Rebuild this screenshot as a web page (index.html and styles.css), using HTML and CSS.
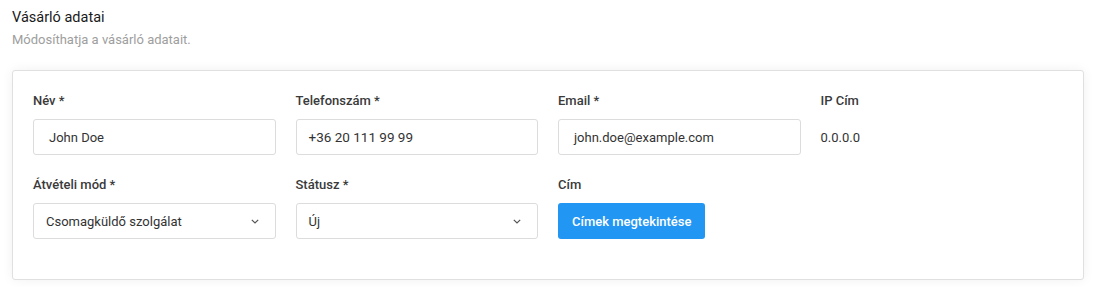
FILE: index.html
```html
<!DOCTYPE html>
<html lang="hu">
<head>
<meta charset="utf-8">
<title>Vásárló adatai</title>
<link rel="stylesheet" href="styles.css">
</head>
<body>
<div class="page">
  <div class="head">
    <h2 class="title">Vásárló adatai</h2>
    <p class="subtitle">Módosíthatja a vásárló adatait.</p>
  </div>
  <div class="card">
    <div class="grid">
      <div class="field">
        <label class="label">Név *</label>
        <div class="input pad15">John Doe</div>
      </div>
      <div class="field">
        <label class="label">Telefonszám *</label>
        <div class="input pad12 big">+36 20 111 99 99</div>
      </div>
      <div class="field">
        <label class="label">Email *</label>
        <div class="input pad15">john.doe@example.com</div>
      </div>
      <div class="field">
        <label class="label">IP Cím</label>
        <div class="plain">0.0.0.0</div>
      </div>
      <div class="field">
        <label class="label">Átvételi mód *</label>
        <div class="input select pad12">
          <span>Csomagküldő szolgálat</span>
          <svg class="chev" width="8" height="5" viewBox="0 0 8 5"><path d="M0.8 0.8 L4 4 L7.2 0.8" fill="none" stroke="#555" stroke-width="1.2"/></svg>
        </div>
      </div>
      <div class="field">
        <label class="label">Státusz *</label>
        <div class="input select pad12">
          <span>Új</span>
          <svg class="chev" width="8" height="5" viewBox="0 0 8 5"><path d="M0.8 0.8 L4 4 L7.2 0.8" fill="none" stroke="#555" stroke-width="1.2"/></svg>
        </div>
      </div>
      <div class="field">
        <label class="label">Cím</label>
        <div><button class="btn">Címek megtekintése</button></div>
      </div>
    </div>
  </div>
</div>
</body>
</html>
```
FILE: styles.css
```css
* { box-sizing: border-box; }
html, body { margin: 0; padding: 0; background: #fff; }
body { font-family: Roboto, "Noto Sans", sans-serif; color: #222; }
.page { padding: 8px 14px 8px 12px; }
.head { margin-bottom: 20px; }
.title { margin: 0; font-size: 14.5px; font-weight: 400; line-height: 20px; color: #1a1a1a; }
.subtitle { margin: 2px 0 0; font-size: 13px; line-height: 20px; color: #9e9e9e; }
.card {
  border: 1px solid #e0e0e0;
  border-radius: 3px;
  background: #fff;
  box-shadow: 0 0 12px rgba(0,0,0,0.06);
  padding: 20px 20px 40px;
  height: 210px;
}
.grid {
  display: grid;
  grid-template-columns: repeat(4, 1fr);
  column-gap: 20px;
  row-gap: 20px;
}
.field { display: flex; flex-direction: column; }
.label { font-size: 13px; font-weight: 500; line-height: 20px; color: #3a3a3a; margin-bottom: 8px; }
.input {
  height: 36px;
  border: 1px solid #dcdcdc;
  border-radius: 3px;
  display: flex;
  align-items: center;
  font-size: 13px;
  color: #333;
}
.pad15 { padding: 0 15px; }
.pad12 { padding: 0 12px; }
.big { font-size: 13.5px; }
.select { justify-content: space-between; padding-right: 16px; }
.chev { display: block; }
.plain { height: 36px; display: flex; align-items: center; font-size: 13px; color: #333; }
.btn {
  height: 36px;
  padding: 0 14px;
  border: none;
  border-radius: 3px;
  background: #2196f3;
  color: #fff;
  font-family: Roboto, "Noto Sans", sans-serif;
  font-size: 13px;
  font-weight: 500;
}
```
